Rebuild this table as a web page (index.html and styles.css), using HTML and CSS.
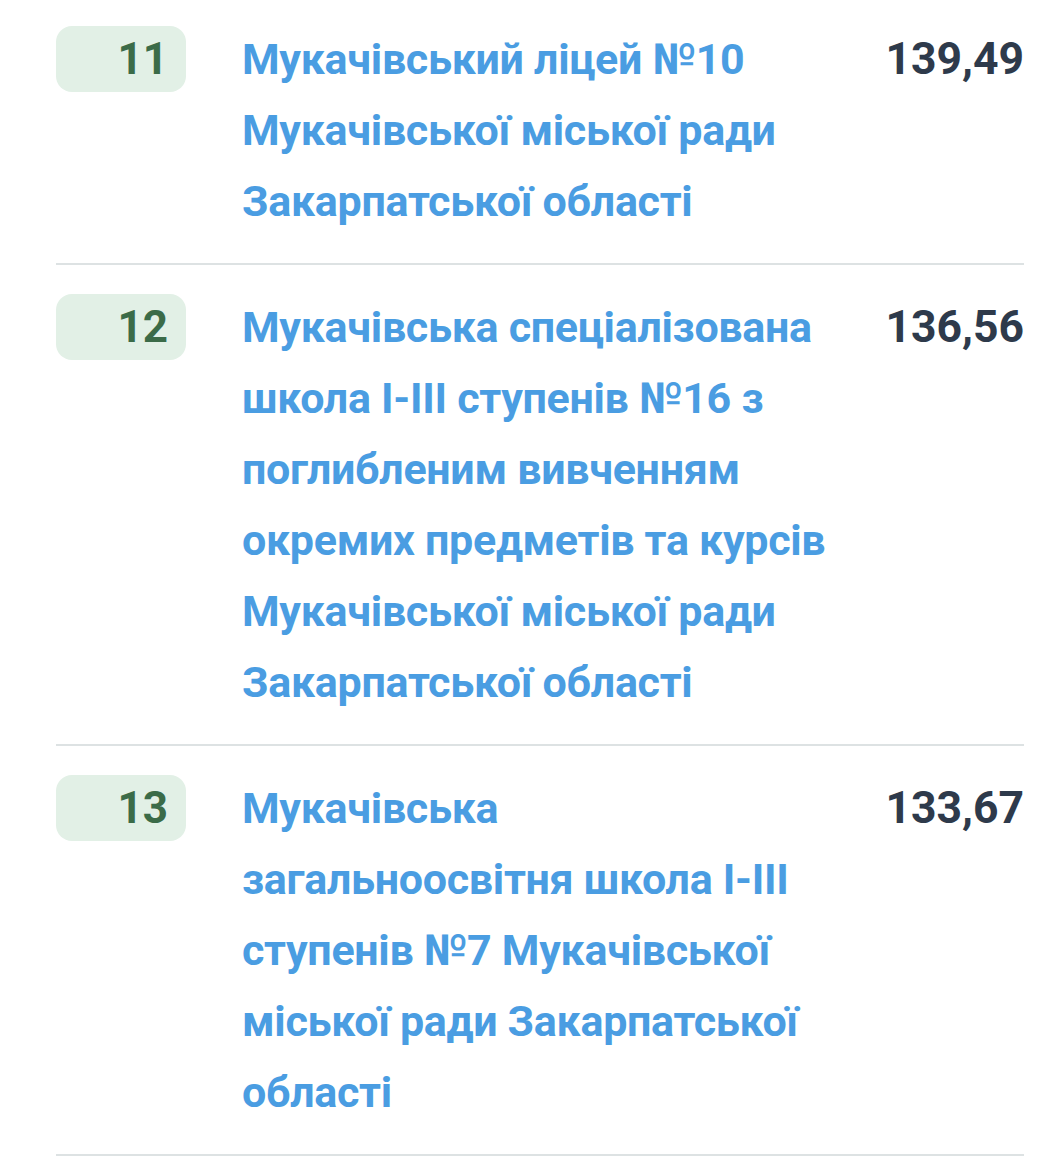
FILE: index.html
```html
<!DOCTYPE html>
<html lang="uk">
<head>
<meta charset="utf-8">
<title>Рейтинг шкіл</title>
<link rel="stylesheet" href="styles.css">
</head>
<body>
<div class="list">
  <div class="row">
    <div class="rank"><span>11</span></div>
    <a class="name" href="#">Мукачівський ліцей №10 Мукачівської міської ради Закарпатської області</a>
    <div class="score">139,49</div>
  </div>
  <div class="row">
    <div class="rank"><span>12</span></div>
    <a class="name" href="#">Мукачівська спеціалізована школа I-III ступенів №16 з поглибленим вивченням окремих предметів та курсів Мукачівської міської ради Закарпатської області</a>
    <div class="score">136,56</div>
  </div>
  <div class="row">
    <div class="rank"><span>13</span></div>
    <a class="name" href="#">Мукачівська загальноосвітня школа I-III ступенів №7 Мукачівської міської ради Закарпатської області</a>
    <div class="score">133,67</div>
  </div>
</div>
</body>
</html>
```

FILE: styles.css
```css
html, body {
  margin: 0;
  padding: 0;
  background: #ffffff;
}

body {
  font-family: Roboto, "Noto Sans", "Liberation Sans", sans-serif;
  font-weight: 700;
  font-size: 43px;
  line-height: 71px;
}

.list {
  padding: 0 28px 0 56px;
}

.row {
  display: flex;
  align-items: flex-start;
  padding: 27px 0 26px;
  border-bottom: 2px solid #dde2e3;
}

.row:first-child {
  padding-top: 24px;
}

.rank {
  flex: 0 0 130px;
  height: 66px;
  margin-top: 2px;
  box-sizing: border-box;
  background: #e2f0e6;
  border-radius: 16px;
  color: #3b6b48;
  display: flex;
  align-items: center;
  justify-content: flex-end;
  padding-right: 18px;
  font-size: 44px;
  line-height: 1;
}

.name {
  flex: 0 0 592px;
  margin-left: 56px;
  letter-spacing: -0.3px;
  color: #4a9de2;
  text-decoration: none;
}

.score {
  flex: 1 1 auto;
  text-align: right;
  font-size: 44.5px;
  color: #2e3a4b;
}
```
